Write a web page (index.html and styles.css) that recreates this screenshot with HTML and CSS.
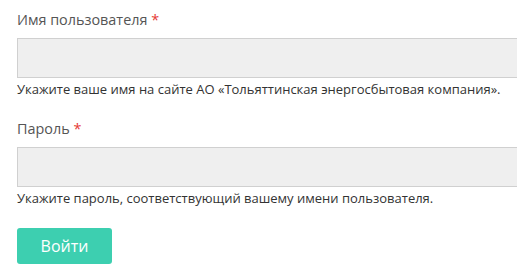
FILE: index.html
```html
<!DOCTYPE html>
<html lang="ru">
<head>
  <meta charset="UTF-8">
  <title>Вход</title>
  <link rel="stylesheet" href="styles.css">
</head>
<body>
  <form class="login-form">
    <div class="form-item">
      <label for="edit-name">Имя пользователя <span class="form-required">*</span></label>
      <input type="text" id="edit-name" class="form-text">
      <div class="description">Укажите ваше имя на сайте АО «Тольяттинская энергосбытовая компания».</div>
    </div>
    <div class="form-item">
      <label for="edit-pass">Пароль <span class="form-required">*</span></label>
      <input type="password" id="edit-pass" class="form-text">
      <div class="description">Укажите пароль, соответствующий вашему имени пользователя.</div>
    </div>
    <div class="form-actions">
      <button type="submit" class="form-submit">Войти</button>
    </div>
  </form>
</body>
</html>
```

FILE: styles.css
```css
body {
  margin: 0;
  font-family: "Open Sans", sans-serif;
  background-color: #fff;
}

.login-form {
  padding: 10px 0 0 17px;
}

.form-item {
  margin-bottom: 21px;
}

.form-item label {
  display: block;
  font-size: 14.4px;
  color: #555;
  line-height: 20px;
  margin-bottom: 8px;
}

.form-required {
  color: #e53935;
}

.form-text {
  display: block;
  box-sizing: border-box;
  width: 100%;
  height: 40px;
  margin: 0;
  background-color: #efefef;
  border: 1px solid #d0d0d0;
  border-right: none;
  font-family: inherit;
}

.description {
  font-size: 13px;
  color: #333;
  line-height: 18px;
  margin-top: 2px;
}

.form-submit {
  width: 95px;
  height: 36px;
  background-color: #3dcfb0;
  color: #fff;
  border: none;
  border-radius: 3px;
  font-family: "Open Sans", sans-serif;
  font-weight: 500;
  font-size: 16px;
  cursor: pointer;
}
```
